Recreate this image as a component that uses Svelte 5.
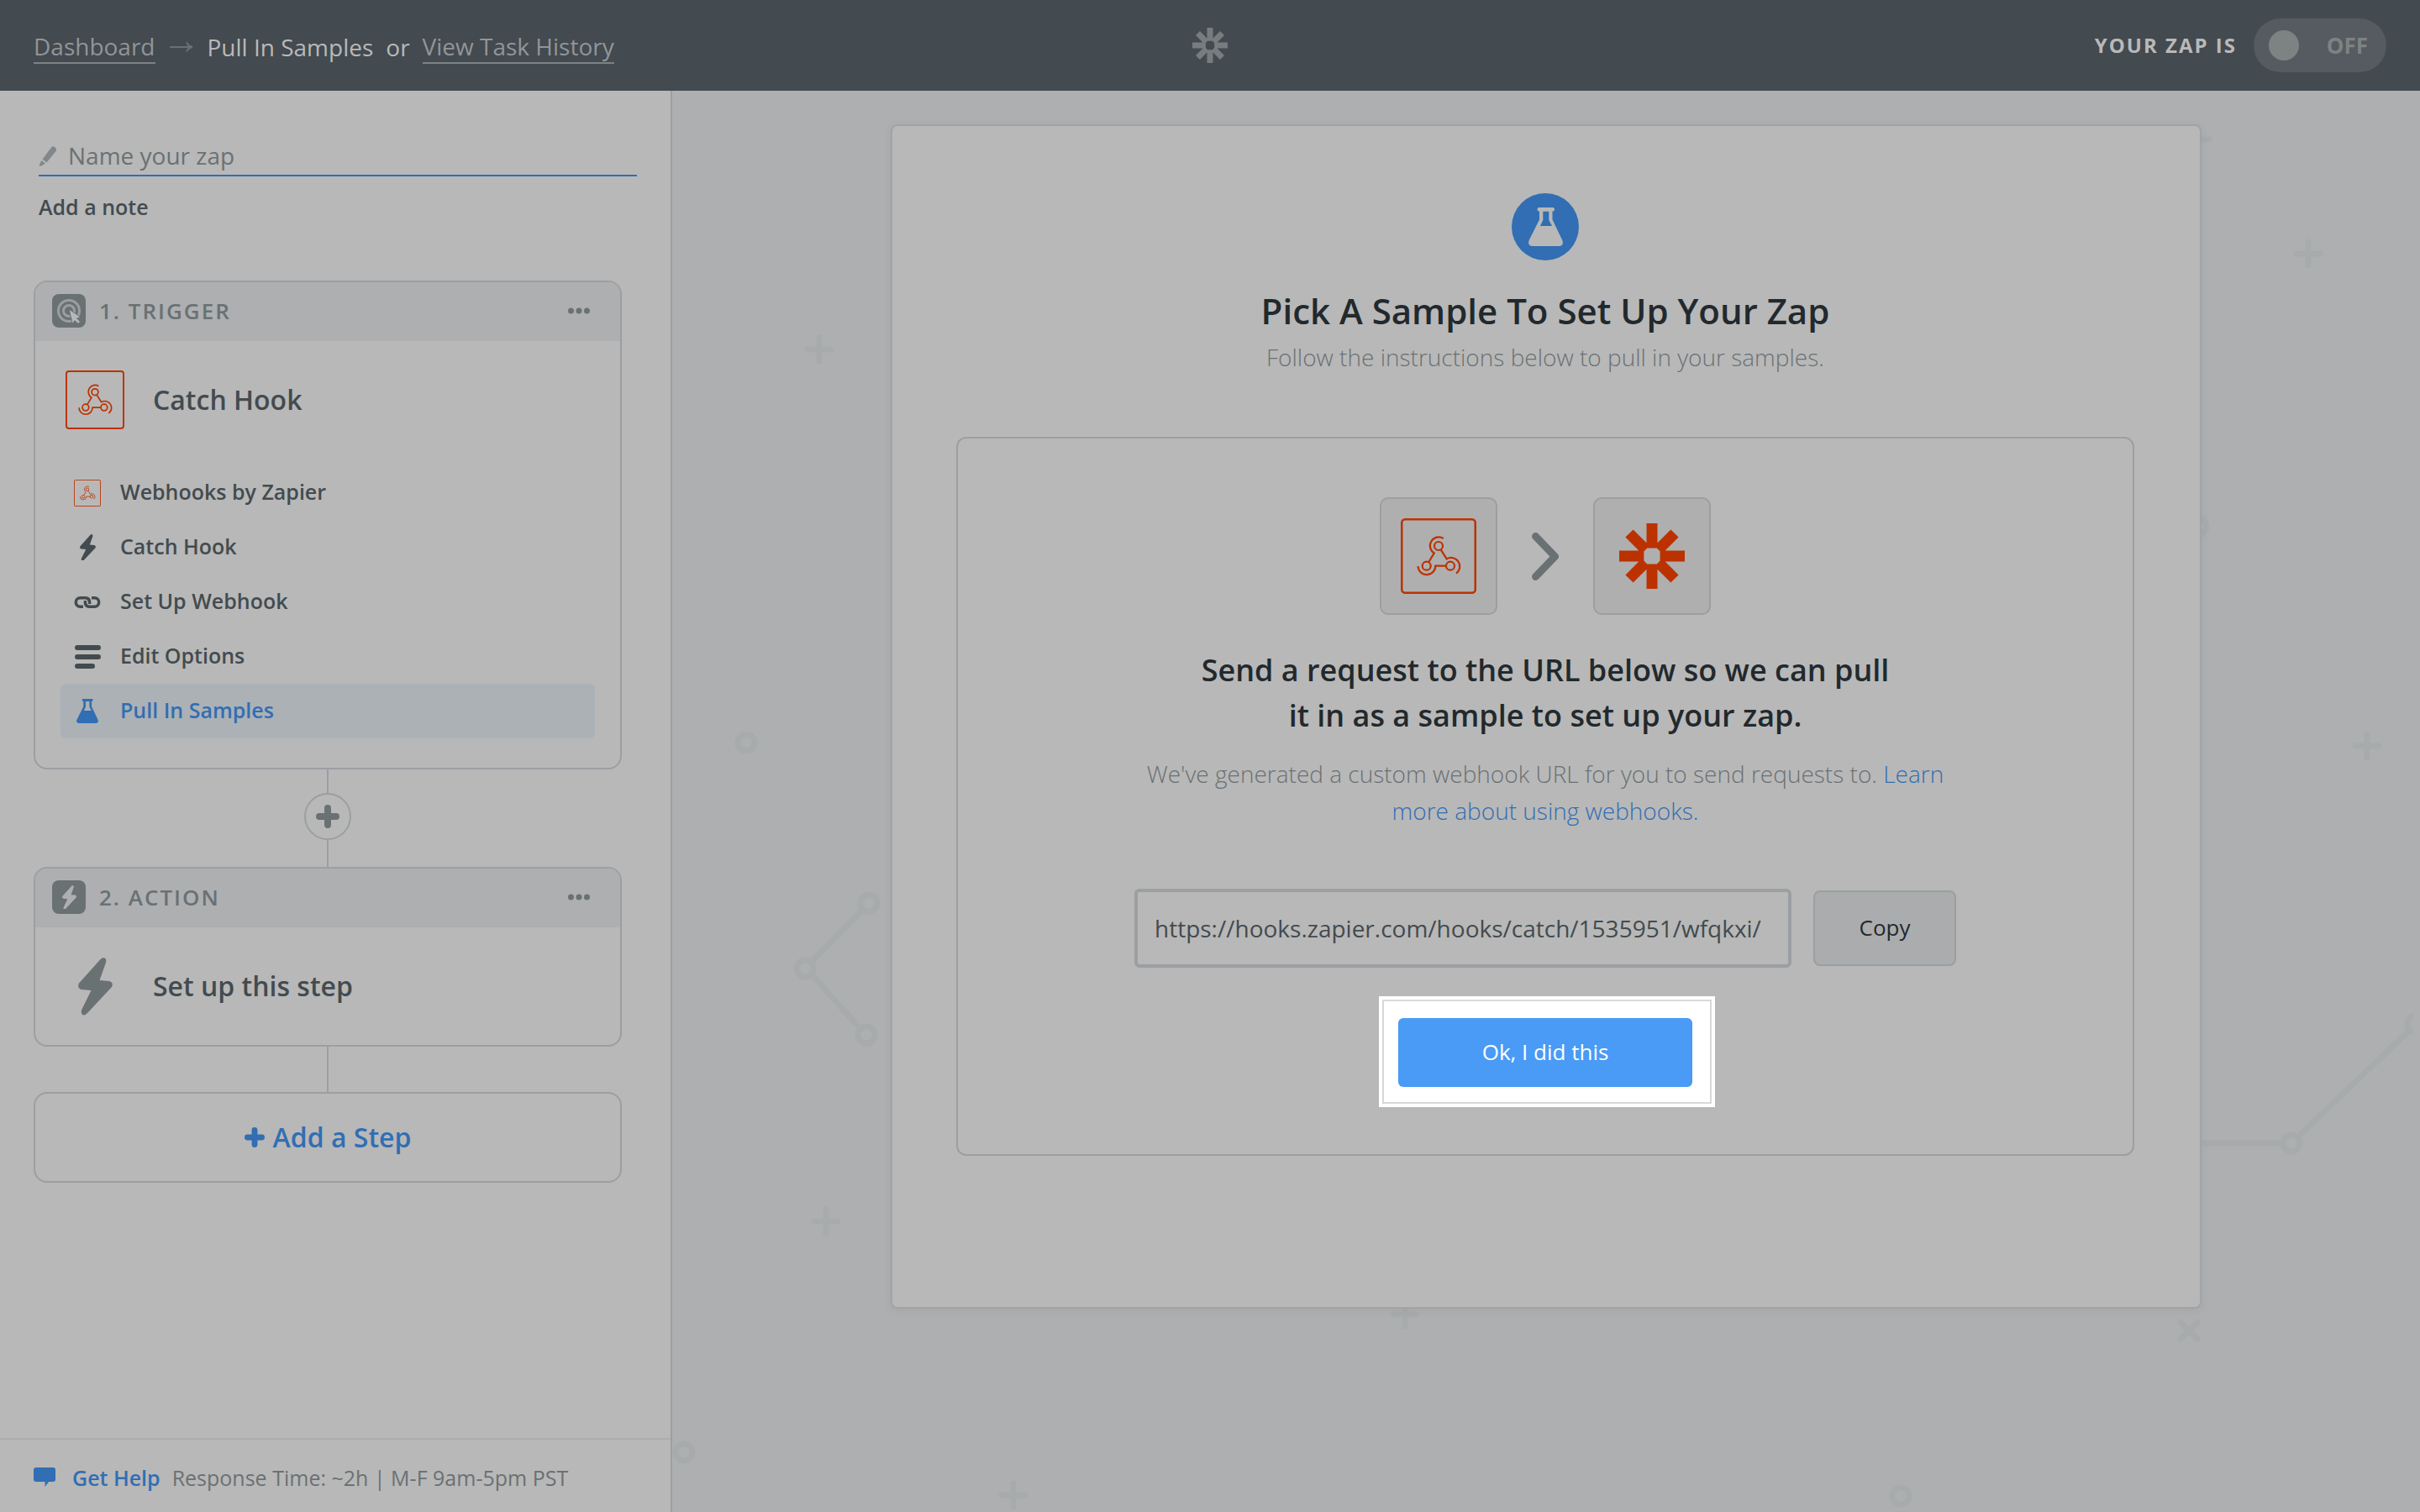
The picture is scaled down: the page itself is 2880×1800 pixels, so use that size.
<script>
  let zapName = $state('');
  let hookUrl = $state('https://hooks.zapier.com/hooks/catch/1535951/wfqkxi/');
  let on = $state(false);

  const substeps = [
    { icon: 'webhook', label: 'Webhooks by Zapier' },
    { icon: 'bolt', label: 'Catch Hook' },
    { icon: 'link', label: 'Set Up Webhook' },
    { icon: 'list', label: 'Edit Options' },
    { icon: 'flask', label: 'Pull In Samples', active: true },
  ];

  // Decorative shapes scattered behind the editor card
  const pluses = [[1815, 58], [1947, 194], [175, 308], [2017, 780], [183, 1346], [872, 1457], [406, 1672]];
  const rings = [[1816, 519], [88, 776], [14, 1621], [1462, 1673], [234, 967], [158, 1045], [231, 1124], [1927, 1253], [2075, 1111]];
</script>

{#snippet webhook()}
  <svg class="icon webhook" viewBox="0 0 90 90" aria-hidden="true">
    <rect x="1.25" y="1.25" width="87.5" height="87.5" rx="4" />
    <circle cx="45" cy="33" r="5" />
    <circle cx="30.7" cy="56.7" r="5" />
    <circle cx="59" cy="56.7" r="5" />
    <path d="M50.7 24A10.3 10.3 0 1 0 39.7 41.5L33.2 52.3" />
    <path d="M47.7 37.3L54.7 48.4A10.3 10.3 0 0 1 66 65.6" />
    <path d="M20.6 57A10.3 10.3 0 0 0 41.3 56.7H54" />
  </svg>
{/snippet}

{#snippet bolt()}
  <svg class="icon bolt" viewBox="0 0 41 69" aria-hidden="true">
    <path d="M27 1.6Q30-.8 32.4 1Q33.800 2.500 33 6L25.500 27L37 28Q42.500 29.500 40 35L11.500 65.500Q8 69.500 5 68Q3.200 66 4 62.500L15.500 39L3.500 38Q-1.500 36 1 30.500Z" />
  </svg>
{/snippet}

{#snippet flask()}
  <svg class="icon flask" viewBox="0 0 41 46" aria-hidden="true">
    <path fill-rule="evenodd" d="M12 0H29.500Q31 .2 31 2.200T29.500 4.400H28.500V14.500L40.300 39Q42.500 45.500 36 46H5Q-1.500 45.500.700 39L13 14.500V4.400H12Q10.500 4.200 10.500 2.200T12 0ZM17.300 4.800V15L14 22H28L24.300 15V4.800Z" />
  </svg>
{/snippet}

{#snippet plus()}
  <svg class="icon plus" viewBox="0 0 28 28" aria-hidden="true"><path d="M14 4V24M4 14H24" /></svg>
{/snippet}

{#snippet burst()}
  <svg class="icon burst" viewBox="-39 -39 78 78" aria-hidden="true">
    <path d="M0-9.600V-39M0 9.600V39M-9.600 0H-39M9.600 0H39M7.600-7.600L27-27M-7.600-7.600L-27-27M7.600 7.600L27 27M-7.600 7.600L-27 27" />
  </svg>
{/snippet}

{#snippet stepIcon(name)}
  {#if name === 'webhook'}
    {@render webhook()}
  {:else if name === 'bolt'}
    {@render bolt()}
  {:else if name === 'flask'}
    {@render flask()}
  {:else if name === 'link'}
    <svg class="icon link" viewBox="0 0 32 14" aria-hidden="true">
      <path d="M11 12.200H7.500A5.200 5.200 0 0 1 7.500 1.800H13.500Q18.600 2 18.600 7V9M21 1.800H24.500A5.200 5.200 0 0 1 24.500 12.200H18.500Q13.400 12 13.400 7V5" />
    </svg>
  {:else}
    <svg class="icon list" viewBox="0 0 32 30" aria-hidden="true">
      <path d="M4 4H29M4 15H29M4 26H22" />
    </svg>
  {/if}
{/snippet}

{#snippet dots()}
  <button class="more" aria-label="Step options">
    <svg viewBox="0 0 26 8" aria-hidden="true"><circle cx="3.500" cy="4" r="3.500" /><circle cx="13" cy="4" r="3.500" /><circle cx="22.500" cy="4" r="3.500" /></svg>
  </button>
{/snippet}

<div class="page">
  <header class="topbar">
    <nav class="crumbs" aria-label="Breadcrumb">
      <a href="#dashboard">Dashboard</a>
      <svg class="arrow" viewBox="0 0 28 14" aria-hidden="true"><path d="M0 7H26M20 1.500Q22 6 27 7Q22 8 20 12.500" /></svg>
      <span>Pull In Samples</span>
      <span class="or">or</span>
      <a href="#history">View Task History</a>
    </nav>
    <a class="home" href="#home" aria-label="Home">{@render burst()}</a>
    <div class="status">
      <span class="status-label">YOUR ZAP IS</span>
      <label class="toggle">
        <input type="checkbox" bind:checked={on} />
        <span>{on ? 'ON' : 'OFF'}</span>
      </label>
    </div>
  </header>

  <div class="body">
    <aside class="sidebar">
      <div class="naming">
        <label class="name">
          <svg viewBox="0 0 22 24" aria-hidden="true"><path d="M15.500 1Q17-.5 19 1L20.500 2.500Q21.500 4 20.500 6L9.500 19.500L4.500 15.500ZM3.500 17L8 20.500L3.500 23.300Q.500 24.500.800 22Z" /></svg>
          <input type="text" placeholder="Name your zap" aria-label="Name your zap" bind:value={zapName} />
        </label>
        <button class="note">Add a note</button>
      </div>

      <div class="steps">
        <section class="step">
          <header>
            <span class="badge">
              <svg viewBox="0 0 40 40" aria-hidden="true">
                <g class="target"><circle cx="20" cy="20" r="12.500" /><circle cx="20" cy="20" r="6.500" /></g>
                <path class="cursor" d="M20 18L34 27.500L29.500 29L33.500 33L31 35.500L27 31.500L24.500 36Z" />
              </svg>
            </span>
            <h2>1. TRIGGER</h2>
            {@render dots()}
          </header>
          <div class="summary">
            <span class="app-icon">{@render webhook()}</span>
            <h3>Catch Hook</h3>
          </div>
          <ul>
            {#each substeps as s}
              <li>
                <a href="#step" class:active={s.active}>
                  <span class="slot">{@render stepIcon(s.icon)}</span>
                  <span class="label">{s.label}</span>
                </a>
              </li>
            {/each}
          </ul>
        </section>

        <div class="line above"></div>
        <button class="insert" aria-label="Insert step">{@render plus()}</button>
        <div class="line below"></div>

        <section class="step">
          <header>
            <span class="badge">{@render bolt()}</span>
            <h2>2. ACTION</h2>
            {@render dots()}
          </header>
          <div class="summary">
            <span class="app-icon">{@render bolt()}</span>
            <h3>Set up this step</h3>
          </div>
        </section>

        <div class="line long"></div>
        <button class="add">{@render plus()}Add a Step</button>
      </div>

      <footer class="help">
        <svg viewBox="0 0 26 24" aria-hidden="true"><path d="M3 0H23Q26 0 26 3V14Q26 17 23 17H18L13.500 23V17H3Q0 17 0 14V3Q0 0 3 0Z" /></svg>
        <a href="#help">Get Help</a>
        <span>Response Time: ~2h | M-F 9am-5pm PST</span>
      </footer>
    </aside>

    <main>
      <svg class="pattern" width="2072" height="1692" aria-hidden="true">
        <path d="M229 972L163 1040M164 1050L226 1119M1820 1253H1917M1934 1246L2068 1118" />
        <path class="round" d="M1795 1466L1815 1486M1815 1466L1795 1486" />
        {#each pluses as [x, y]}
          <path class="round" d="M{x - 14} {y}h28M{x} {y - 14}v28" />
        {/each}
        {#each rings as [x, y]}
          <circle cx={x} cy={y} r="10" />
        {/each}
      </svg>

      <article class="card">
        <span class="disc">{@render flask()}</span>
        <h1>Pick A Sample To Set Up Your Zap</h1>
        <p class="sub">Follow the instructions below to pull in your samples.</p>

        <section class="panel">
          <div class="flow">
            <span class="tile">{@render webhook()}</span>
            <svg class="chevron" viewBox="0 0 32 57" aria-hidden="true"><path d="M4.500 4.500L27.500 28.500L4.500 52.500" /></svg>
            <span class="tile">{@render burst()}</span>
          </div>
          <h2>Send a request to the URL below so we can pull it in as a sample to set up your zap.</h2>
          <p>We've generated a custom webhook URL for you to send requests to. <a href="#learn">Learn more about using webhooks.</a></p>
          <div class="url">
            <input type="text" aria-label="Webhook URL" bind:value={hookUrl} />
            <button class="copy">Copy</button>
          </div>
          <div class="spotlight">
            <button>Ok, I did this</button>
          </div>
        </section>
      </article>
    </main>
  </div>
</div>

<style>
  :global(body) {
    margin: 0;
    background: #aeafb1;
  }

  .page {
    --ink: #434b4f;
    --dark: #22292d;
    --muted: #6a7173;
    --line: #9b9fa2;
    --blue: #316eb3;
    --orange: #bb3200;
    --paper: #b8b8b8;
    display: flex;
    flex-direction: column;
    min-height: 100vh;
    font-family: 'Open Sans', sans-serif;
    font-size: 28px;
    line-height: 40px;
    color: var(--ink);
  }

  .page *,
  .page {
    box-sizing: border-box;
  }

  h1, h2, h3, p, ul {
    margin: 0;
    padding: 0;
    font-weight: 600;
  }

  ul {
    list-style: none;
  }

  a {
    color: inherit;
    text-decoration: none;
  }

  button,
  input {
    margin: 0;
    padding: 0;
    border: 0;
    background: none;
    font: inherit;
    color: inherit;
  }

  svg {
    display: block;
    flex: none;
  }

  .icon {
    fill: currentColor;
  }

  .webhook {
    width: 100%;
    fill: none;
    stroke: var(--orange);
    stroke-width: 2.5;
  }

  .webhook circle,
  .webhook path {
    stroke-width: 2.2;
  }

  .burst,
  .plus {
    fill: none;
    stroke: currentColor;
    stroke-width: 13;
  }

  .plus {
    stroke-width: 8;
    stroke-linecap: round;
  }

  /* Top bar */
  .topbar {
    display: grid;
    grid-template-columns: 1fr auto 1fr;
    align-items: center;
    height: 108px;
    padding: 0 40px;
    background: #434a50;
    color: #b9b9b9;
  }

  .crumbs {
    display: flex;
    align-items: center;
    gap: 15px;
    padding-top: 3px;
  }

  .crumbs a {
    border-bottom: 2px solid #7d8283;
    color: #929597;
    line-height: 38px;
  }

  .arrow {
    width: 28px;
    margin: 0 2px;
    fill: none;
    stroke: var(--muted);
    stroke-width: 2;
  }

  .home {
    color: #777c7f;
  }

  .home .burst {
    width: 42px;
  }

  .status {
    display: flex;
    align-items: center;
    justify-content: flex-end;
    gap: 20px;
    font-weight: 700;
  }

  .status-label {
    font-size: 24px;
    letter-spacing: 2px;
  }

  .toggle {
    display: flex;
    align-items: center;
    justify-content: space-between;
    width: 158px;
    height: 64px;
    padding: 0 22px 0 18px;
    border-radius: 32px;
    background: #565b61;
    color: #7d8283;
    font-size: 26px;
  }

  .toggle input {
    appearance: none;
    width: 36px;
    height: 36px;
    border-radius: 50%;
    background: #7d8283;
  }

  /* Sidebar */
  .body {
    display: flex;
    flex: 1;
  }

  .sidebar {
    display: flex;
    flex: 0 0 800px;
    flex-direction: column;
    border-right: 2px solid var(--line);
    background: var(--paper);
  }

  .naming {
    display: flex;
    flex-direction: column;
    align-items: flex-start;
    gap: 16px;
    padding: 56px 40px 0 46px;
  }

  .name {
    display: flex;
    align-items: center;
    gap: 13px;
    width: 100%;
    border-bottom: 2px solid var(--blue);
    color: var(--muted);
  }

  .name svg {
    width: 22px;
    fill: #80888a;
  }

  .name input {
    flex: 1;
    height: 44px;
    padding-bottom: 3px;
    outline: none;
  }

  .name input::placeholder {
    color: var(--muted);
    opacity: 1;
  }

  .note {
    font-size: 25px;
    font-weight: 600;
  }

  .steps {
    display: flex;
    flex-direction: column;
    align-items: center;
    padding: 68px 58px 0 40px;
  }

  .step,
  .add {
    width: 100%;
    border: 2px solid var(--line);
    border-radius: 16px;
  }

  .step {
    overflow: hidden;
  }

  .step > header {
    display: flex;
    align-items: center;
    gap: 16px;
    height: 70px;
    padding: 0 36px 2px 20px;
    background: #aeafb1;
    color: var(--muted);
  }

  .step h2 {
    flex: 1;
    font-size: 26px;
    letter-spacing: 2px;
  }

  .badge {
    display: flex;
    align-items: center;
    justify-content: center;
    width: 40px;
    height: 40px;
    border-radius: 8px;
    background: var(--muted);
    color: #aeafb1;
  }

  .badge .bolt {
    width: 17px;
  }

  .target {
    fill: none;
    stroke: #9a9ea0;
    stroke-width: 3;
  }

  .cursor {
    fill: #b8b8b8;
    stroke: var(--muted);
    stroke-width: 1;
  }

  .more svg {
    width: 26px;
    fill: var(--muted);
  }

  .summary {
    display: flex;
    align-items: center;
    gap: 34px;
    height: 140px;
    padding: 0 36px;
  }

  .summary h3 {
    font-size: 32px;
  }

  .app-icon {
    display: flex;
    justify-content: center;
    width: 70px;
    color: var(--muted);
  }

  .app-icon .bolt {
    width: 41px;
  }

  .step ul {
    padding: 8px 30px 35px;
  }

  li a {
    display: flex;
    align-items: center;
    gap: 23px;
    height: 65px;
    padding: 0 16px;
    border-radius: 6px;
    font-size: 25px;
    font-weight: 600;
  }

  li a.active {
    background: #acb1b5;
    color: var(--blue);
  }

  .label {
    padding-bottom: 3px;
  }

  .slot {
    display: flex;
    justify-content: center;
    width: 32px;
  }

  .slot .bolt {
    width: 19px;
  }

  .slot .flask {
    width: 26px;
  }

  .link,
  .list {
    width: 32px;
    fill: none;
    stroke: currentColor;
    stroke-width: 3.5;
  }

  .list {
    stroke-width: 6;
    stroke-linecap: round;
  }

  .line {
    width: 2px;
    background: var(--line);
  }

  .above {
    height: 28px;
  }

  .below {
    height: 32px;
  }

  .long {
    height: 54px;
  }

  .insert {
    display: flex;
    align-items: center;
    justify-content: center;
    width: 56px;
    height: 56px;
    border: 2px solid var(--line);
    border-radius: 50%;
    color: var(--muted);
  }

  .insert .plus {
    width: 28px;
  }

  .add {
    display: flex;
    align-items: center;
    justify-content: center;
    gap: 10px;
    height: 108px;
    color: var(--blue);
    font-size: 32px;
    font-weight: 600;
  }

  .add .plus {
    width: 24px;
  }

  .help {
    display: flex;
    align-items: center;
    gap: 14px;
    height: 88px;
    margin-top: auto;
    padding: 4px 40px 0;
    border-top: 2px solid #adadae;
    color: var(--muted);
    font-size: 25px;
  }

  .help svg {
    width: 26px;
    margin-right: 6px;
    fill: var(--blue);
  }

  .help a {
    color: var(--blue);
    font-weight: 600;
  }

  /* Editor */
  main {
    position: relative;
    display: flex;
    flex: 1;
    align-items: flex-start;
    justify-content: center;
    overflow: hidden;
    padding: 40px;
  }

  .pattern {
    position: absolute;
    top: 0;
    left: 0;
    fill: none;
    stroke: #a7abac;
    stroke-width: 7;
  }

  .round {
    stroke-linecap: round;
  }

  .card {
    position: relative;
    display: flex;
    flex: 0 1 1560px;
    flex-direction: column;
    align-items: center;
    padding: 80px 78px 180px 76px;
    border: 2px solid #a1a4a7;
    border-radius: 8px;
    background: var(--paper);
    box-shadow: 0 2px 8px rgba(90, 100, 90, 0.12);
    text-align: center;
  }

  .disc {
    display: flex;
    align-items: center;
    justify-content: center;
    width: 80px;
    height: 80px;
    border-radius: 50%;
    background: var(--blue);
    color: var(--paper);
  }

  .disc .flask {
    width: 41px;
  }

  h1 {
    margin-top: 30px;
    color: var(--dark);
    font-size: 42px;
    line-height: 60px;
  }

  .sub {
    margin-top: 5px;
    color: var(--muted);
    font-weight: 300;
  }

  .panel {
    display: flex;
    flex-direction: column;
    align-items: center;
    align-self: stretch;
    margin-top: 75px;
    padding: 70px 40px 56px;
    border: 2px solid var(--line);
    border-radius: 12px;
  }

  .flow {
    display: flex;
    align-items: center;
    gap: 41px;
  }

  .tile {
    display: flex;
    align-items: center;
    justify-content: center;
    width: 140px;
    height: 140px;
    border: 2px solid var(--line);
    border-radius: 10px;
    background: #afafaf;
    color: var(--orange);
  }

  .tile .webhook {
    width: 90px;
  }

  .tile .burst {
    width: 78px;
  }

  .chevron {
    width: 32px;
    fill: none;
    stroke: var(--muted);
    stroke-width: 9;
    stroke-linecap: round;
    stroke-linejoin: round;
  }

  .panel h2 {
    max-width: 840px;
    margin-top: 39px;
    color: var(--dark);
    font-size: 36px;
    line-height: 54px;
  }

  .panel p {
    max-width: 980px;
    margin-top: 20px;
    color: var(--muted);
    font-weight: 300;
    line-height: 44px;
  }

  .panel p a {
    color: var(--blue);
  }

  .url {
    display: flex;
    align-items: center;
    gap: 26px;
    margin-top: 71px;
  }

  .url input {
    width: 782px;
    height: 94px;
    padding: 0 20px;
    border: 4px solid var(--line);
    border-radius: 6px;
  }

  .copy {
    width: 170px;
    height: 90px;
    padding-bottom: 2px;
    border: 2px solid var(--line);
    border-radius: 8px;
    background: #abacae;
    color: var(--dark);
    font-size: 26px;
  }

  .spotlight {
    margin: 34px 0 0 4px;
    padding: 26px 27px 24px 23px;
    background: #fff;
    outline: 2px solid #d8d8d8;
    outline-offset: -6px;
  }

  .spotlight button {
    display: block;
    width: 350px;
    height: 82px;
    padding-bottom: 2px;
    border-radius: 6px;
    background: #499bf5;
    color: #fff;
    font-size: 26px;
  }
</style>
